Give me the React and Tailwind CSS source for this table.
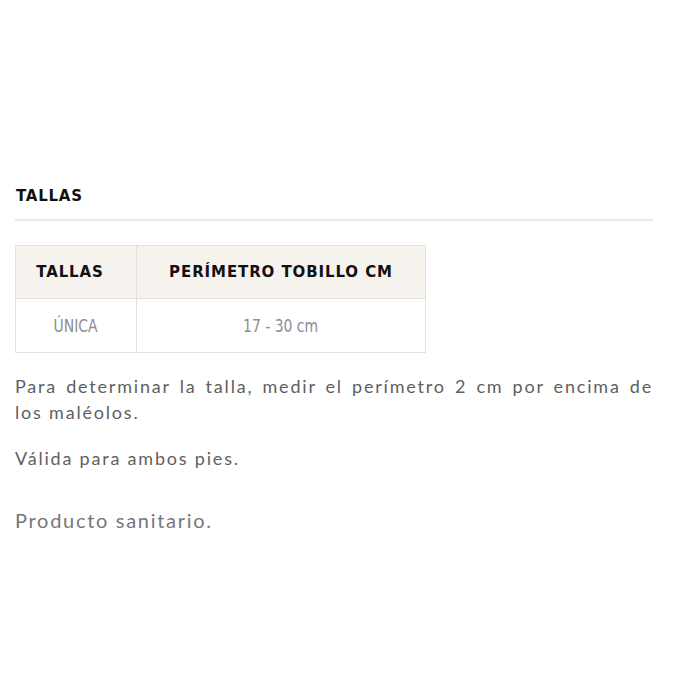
const rows = [{ talla: "ÚNICA", perimetro: "17 - 30 cm" }];

const headFont = { fontFamily: "'DejaVu Sans', sans-serif" };
const cellFont = { fontFamily: "'Liberation Sans Narrow', 'DejaVu Sans Condensed', sans-serif" };

const App = () => {
    return (
        <div className="w-[700px] h-[700px] bg-white px-[15px] pt-[186px]" style={{ fontFamily: "Lato, 'Noto Sans', sans-serif" }}>
            <div className="w-[638px]">
                <h3 className="text-[15px] font-bold tracking-[0.05em] text-[#111] leading-5 pl-[1px]" style={headFont}>
                    TALLAS
                </h3>
                <div className="mt-[13px] h-[2px] bg-[#ebe9e6]" />

                <table className="mt-[24px] border-collapse">
                    <thead>
                        <tr className="bg-[#f6f3ef]">
                            <th className="w-[121px] h-[53px] pr-[12px] border border-[#e4e1dc] text-[15px] font-bold tracking-[0.06em] text-[#111]" style={headFont}>
                                TALLAS
                            </th>
                            <th className="w-[289px] h-[53px] border border-[#e4e1dc] text-[15px] font-bold tracking-[0.06em] text-[#111]" style={headFont}>
                                PERÍMETRO TOBILLO CM
                            </th>
                        </tr>
                    </thead>
                    <tbody>
                        {rows.map(row => (
                            <tr key={row.talla}>
                                <td className="h-[54px] border border-[#e4e1dc] text-center text-[18px] text-[#8b8d93]" style={cellFont}>
                                    <span className="inline-block scale-x-[0.86]">{row.talla}</span>
                                </td>
                                <td className="h-[54px] border border-[#e4e1dc] text-center text-[18px] text-[#8b8d93]" style={cellFont}>
                                    <span className="inline-block scale-x-[0.86]">{row.perimetro}</span>
                                </td>
                            </tr>
                        ))}
                    </tbody>
                </table>

                <p className="mt-[20px] text-[18px] leading-[26px] text-[#5f5f5f] text-justify tracking-[0.1em]">
                    Para determinar la talla, medir el perímetro 2 cm por encima de los maléolos.
                </p>
                <p className="mt-[20px] text-[18px] leading-[26px] text-[#5f5f5f] tracking-[0.1em]">
                    Válida para ambos pies.
                </p>
                <p className="mt-[36px] text-[20px] leading-[26px] text-[#777] tracking-[0.085em]">
                    Producto sanitario.
                </p>
            </div>
        </div>
    );
};

export default App;
